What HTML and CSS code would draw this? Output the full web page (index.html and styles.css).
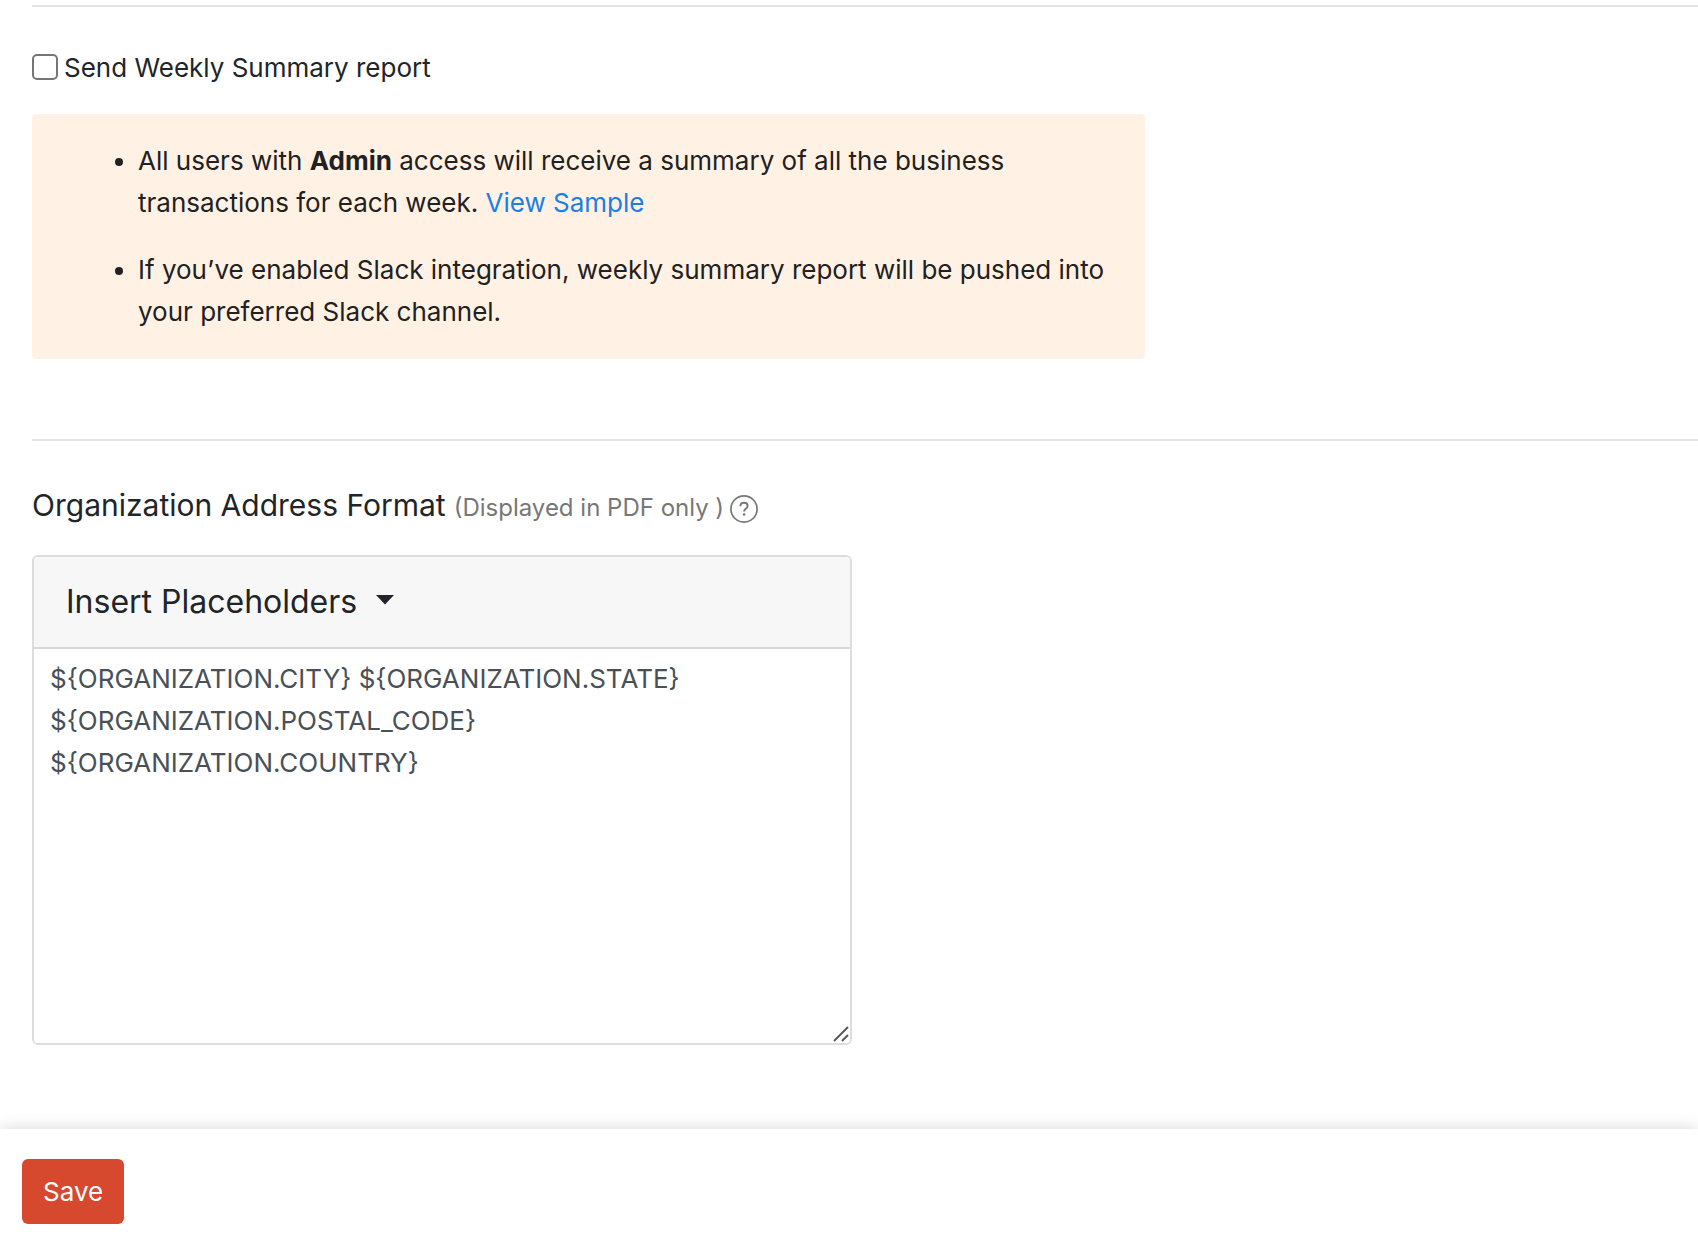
FILE: index.html
```html
<!DOCTYPE html>
<html lang="en">
<head>
<meta charset="utf-8">
<meta name="viewport" content="width=device-width, initial-scale=1">
<title>Organization preferences</title>
<link rel="stylesheet" href="styles.css">
</head>
<body>
<form class="page">
  <main class="content">
    <section class="section">
      <div class="check">
        <input class="check-box" type="checkbox" id="weekly">
        <label for="weekly">Send Weekly Summary report</label>
      </div>
      <ul class="note">
        <li>All users with <strong>Admin</strong> access will receive a summary of all the business transactions for each week. <a class="link" href="#">View Sample</a></li>
        <li>If you’ve enabled Slack integration, weekly summary report will be pushed into your preferred Slack channel.</li>
      </ul>
    </section>
    <section class="section">
      <div class="heading">
        <label class="title" for="address">Organization Address Format</label>
        <span class="hint">(Displayed in PDF only )</span>
        <svg class="help" viewBox="0 0 28 28" role="img" aria-label="Help">
          <circle cx="14" cy="14" r="13.1" fill="none" stroke="currentColor" stroke-width="1.7"/>
          <path d="M10.4 11.2c0-2.1 1.5-3.4 3.6-3.4s3.6 1.3 3.6 3.1c0 1.5-.8 2.2-1.8 2.9-1.2.8-1.7 1.3-1.7 2.7" fill="none" stroke="currentColor" stroke-width="1.9"/>
          <circle cx="14.1" cy="19.5" r="1.3" fill="currentColor"/>
        </svg>
      </div>
      <div class="editor">
        <div class="toolbar">
          <button class="dropdown" type="button">Insert Placeholders
            <svg class="caret" viewBox="0 0 18 10" aria-hidden="true"><path d="M0 0h18l-9 9.5z" fill="currentColor"/></svg>
          </button>
        </div>
        <textarea class="address" id="address" spellcheck="false">${ORGANIZATION.CITY} ${ORGANIZATION.STATE}
${ORGANIZATION.POSTAL_CODE}
${ORGANIZATION.COUNTRY}</textarea>
        <svg class="grip" viewBox="0 0 16 16" aria-hidden="true"><path d="M1 15L15 1M9 15l6-6" fill="none" stroke="#555559" stroke-width="1.8"/></svg>
      </div>
    </section>
  </main>
  <footer class="footer">
    <button class="save" type="submit">Save</button>
  </footer>
</form>
</body>
</html>
```
FILE: styles.css
```css
* {
  box-sizing: border-box;
}

body {
  margin: 0;
  background: #fff;
  color: #212529;
  font: 26px/42px Inter, "Liberation Sans", sans-serif;
}

.page {
  display: flex;
  flex-direction: column;
  min-height: 100vh;
}

.content {
  flex: 1;
  padding: 5px 0 0 32px;
}

.section {
  border-top: 2px solid #e5e5e5;
  padding: 40px 0 80px;
}

.check {
  display: flex;
  align-items: center;
  gap: 6px;
  margin-bottom: 25px;
}

.check-box {
  appearance: none;
  width: 26px;
  height: 26px;
  margin: 0 0 2px;
  border: 2px solid #767676;
  border-radius: 5px;
  background: #fff;
}

.check-box:checked {
  background: #1b7fe8;
}

.note {
  display: flex;
  flex-direction: column;
  gap: 25px;
  max-width: 1113px;
  margin: 0;
  padding: 26px 40px 26px 106px;
  border-radius: 4px;
  background: #fff2e4;
  color: #212121;
}

.link {
  color: #1b7fe8;
  text-decoration: none;
}

.heading {
  display: flex;
  align-items: baseline;
  padding: 3px 0;
  margin-bottom: 23px;
}

.title {
  margin-right: 8px;
  font-size: 30px;
}

.hint {
  margin-right: 6px;
  color: #777;
  font-size: 24px;
}

.help {
  width: 28px;
  height: 28px;
  align-self: center;
  margin-top: 4px;
  color: #777;
}

.editor {
  position: relative;
  max-width: 820px;
  border: 2px solid #ddd;
  border-radius: 6px;
  overflow: hidden;
}

.toolbar {
  padding: 24px 32px;
  border-bottom: 2px solid #d8d8d8;
  background: #f7f7f7;
}

.dropdown {
  display: flex;
  align-items: center;
  gap: 19px;
  padding: 0;
  border: 0;
  background: none;
  color: inherit;
  font: inherit;
  font-size: 32px;
}

.caret {
  width: 18px;
  height: 10px;
  margin-bottom: 4px;
}

.address {
  display: block;
  width: 100%;
  height: 394px;
  padding: 9px 16px;
  border: 0;
  outline: 0;
  background: #fff;
  color: #495057;
  font: inherit;
  resize: vertical;
}

.address::-webkit-resizer {
  display: none;
}

.grip {
  position: absolute;
  right: 1px;
  bottom: 1px;
  width: 16px;
  height: 16px;
  pointer-events: none;
}

.footer {
  padding: 30px 22px 26px;
  background: #fff;
  box-shadow: 0 0 16px rgba(0, 0, 0, 0.16);
}

.save {
  display: block;
  padding: 12px 21px 11px;
  border: 0;
  border-radius: 6px;
  background: #d6492f;
  color: #fff;
  font: inherit;
}
```
